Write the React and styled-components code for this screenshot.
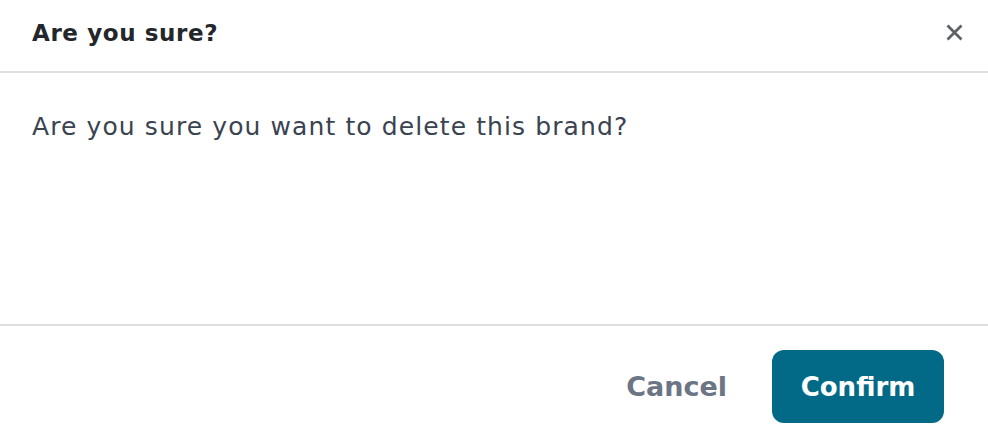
import React from "react"
import styled, { createGlobalStyle } from "styled-components"

const GlobalStyle = createGlobalStyle`
  html, body {
    margin: 0;
    padding: 0;
    background: #ffffff;
  }
  body {
    font-family: "DejaVu Sans", "Open Sans", sans-serif;
  }
`

export default function App() {
  return (
    <>
      <GlobalStyle />
      <Modal>
        <Header>
          <Title>Are you sure?</Title>
          <Close aria-label="Close">
            <svg width="17" height="17" viewBox="0 0 17 17" fill="none">
              <path
                d="M1.5 1.5L15.5 15.5M15.5 1.5L1.5 15.5"
                stroke="currentColor"
                strokeWidth="2.8"
              />
            </svg>
          </Close>
        </Header>
        <Body>Are you sure you want to delete this brand?</Body>
        <Footer>
          <CancelButton>Cancel</CancelButton>
          <ConfirmButton>Confirm</ConfirmButton>
        </Footer>
      </Modal>
    </>
  )
}

const Modal = styled.div`
  display: flex;
  flex-direction: column;
  width: 988px;
  height: 438px;
  background: #fff;
`

const Header = styled.div`
  display: flex;
  align-items: center;
  justify-content: space-between;
  height: 73px;
  padding: 0 20px 6px 32px;
  border-bottom: 2px solid #dedfe0;
  box-sizing: border-box;
`

const Title = styled.h2`
  margin: 0;
  font-size: 23px;
  font-weight: 700;
  color: #23272b;
  letter-spacing: 0.6px;
`

const Close = styled.button`
  display: flex;
  align-items: center;
  justify-content: center;
  width: 28px;
  height: 28px;
  padding: 0;
  border: none;
  background: none;
  color: #5e6168;
  cursor: pointer;
`

const Body = styled.div`
  flex: 1;
  padding: 39px 32px 0;
  font-size: 25px;
  font-weight: 400;
  color: #3a4350;
  letter-spacing: 1.1px;
`

const Footer = styled.div`
  display: flex;
  align-items: flex-start;
  justify-content: flex-end;
  gap: 45px;
  height: 114px;
  padding: 24px 44px 0 32px;
  border-top: 2px solid #dedfe0;
  box-sizing: border-box;
`

const CancelButton = styled.button`
  align-self: center;
  margin-top: -15px;
  padding: 0;
  border: none;
  background: none;
  font-family: inherit;
  font-size: 27px;
  font-weight: 700;
  color: #6b7585;
  cursor: pointer;
`

const ConfirmButton = styled.button`
  height: 73px;
  width: 172px;
  padding: 0;
  border: none;
  border-radius: 12px;
  background: #026a86;
  font-family: inherit;
  font-size: 26px;
  font-weight: 700;
  color: #fff;
  cursor: pointer;
`
